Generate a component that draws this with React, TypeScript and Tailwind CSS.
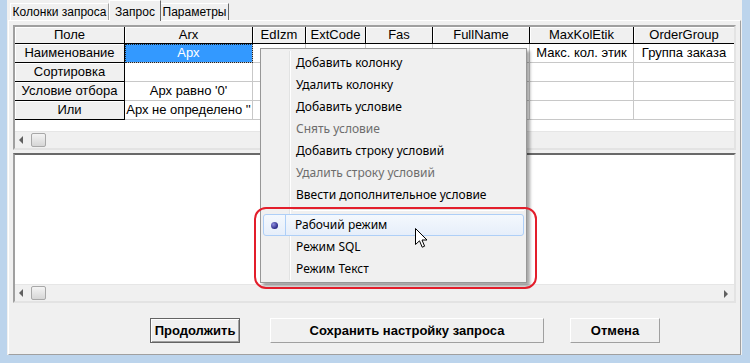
import React from 'react';

const COLS = [
  { name: 'Поле', w: 110 },
  { name: 'Arx', w: 128 },
  { name: 'EdIzm', w: 53 },
  { name: 'ExtCode', w: 60 },
  { name: 'Fas', w: 67 },
  { name: 'FullName', w: 97 },
  { name: 'MaxKolEtik', w: 104 },
  { name: 'OrderGroup', w: 101 },
];

const ROWS: string[][] = [
  ['Наименование', 'Арх', '', '', '', 'Наименован', 'Макс. кол. этик', 'Группа заказа'],
  ['Сортировка', '', '', '', '', '', '', ''],
  ['Условие отбора', "Арх равно '0'", '', '', '', '', '', ''],
  ['Или', "Арх не определено ''", '', '', '', '', '', ''],
];

const MENU: { label: string; disabled?: boolean; sep?: boolean; active?: boolean }[] = [
  { label: 'Добавить колонку' },
  { label: 'Удалить колонку' },
  { label: 'Добавить условие' },
  { label: 'Снять условие', disabled: true },
  { label: 'Добавить строку условий' },
  { label: 'Удалить строку условий', disabled: true },
  { label: 'Ввести дополнительное условие' },
  { label: '', sep: true },
  { label: 'Рабочий режим', active: true },
  { label: 'Режим SQL' },
  { label: 'Режим Текст' },
];

function ScrollBar({ right }: { right?: boolean }) {
  return (
    <div className="h-[17px] shrink-0 bg-[#f0f0f0] border-t border-[#e6e6e6] flex items-center relative">
      <span className="ml-[4px] w-0 h-0 border-y-[4px] border-y-transparent border-r-[4px] border-r-[#606060]" />
      <div className="ml-[8px] w-[15px] h-[14px] rounded-[2px] border border-[#a8a8a8] bg-gradient-to-b from-[#f4f4f4] to-[#d6d6d6]" />
      {right && (
        <span className="absolute right-[6px] top-[5px] w-0 h-0 border-y-[4px] border-y-transparent border-l-[4px] border-l-[#606060]" />
      )}
    </div>
  );
}

function Cell({ w, text, fixed, sel }: { w: number; text: string; fixed?: boolean; sel?: boolean }) {
  if (sel) {
    return (
      <div
        className="h-full shrink-0 bg-[#3399ff] text-white flex items-center justify-center outline-1 outline-dotted outline-[#202020] -outline-offset-1 border-r border-b border-[#c0c0c0]"
        style={{ width: w }}
      >
        {text}
      </div>
    );
  }
  return (
    <div
      className={
        fixed
          ? 'h-full shrink-0 bg-[#f0f0f0] border-r border-b border-black shadow-[inset_1px_1px_0_#ffffff] flex items-center justify-center whitespace-nowrap overflow-hidden'
          : 'h-full shrink-0 bg-white border-r border-b border-[#c8c8c8] flex items-center justify-center whitespace-nowrap overflow-hidden'
      }
      style={{ width: w }}
    >
      {text}
    </div>
  );
}

export default function App() {
  return (
    <div className="w-[750px] h-[363px] bg-[#bcd4ec] relative overflow-hidden pl-[7px] pr-[8px] pb-[8px] font-['Liberation_Sans',sans-serif] text-black">
      <div className="h-full bg-[#f0f0f0] flex flex-col">
        {/* tabs */}
        <div className="h-[20px] flex items-end pl-[3px] text-[12px] relative z-10 shrink-0">
          <div className="w-[99px] h-[17px] border-t border-l border-white border-r border-r-[#a0a0a0] flex items-center justify-center">
            Колонки запроса
          </div>
          <div className="w-[52px] h-[21px] -mb-[1px] bg-[#f0f0f0] border-t border-l border-white border-r border-r-[#696969] flex items-start pt-[2px] justify-center">
            Запрос
          </div>
          <div className="w-[68px] h-[17px] border-t border-white border-r border-r-[#696969] flex items-center justify-center">
            Параметры
          </div>
        </div>

        {/* panel */}
        <div className="ml-[1px] w-[733px] flex-1 border-t border-l border-white border-r border-b border-r-[#a0a0a0] border-b-[#a0a0a0] px-[4px] pt-[4px] flex flex-col">
          {/* upper grid */}
          <div className="h-[125px] shrink-0 border-[2px] border-t-[#a0a0a0] border-l-[#a0a0a0] border-b-[#e3e3e3] border-r-[#e3e3e3] flex flex-col bg-white text-[13px] overflow-hidden">
            <div className="h-[17px] flex shrink-0">
              {COLS.map(c => (
                <Cell key={c.name} w={c.w} text={c.name} fixed />
              ))}
            </div>
            {ROWS.map((r, i) => (
              <div key={i} className="h-[19px] flex shrink-0">
                {r.map((t, j) => (
                  <Cell key={j} w={COLS[j].w} text={t} fixed={j === 0} sel={i === 0 && j === 1} />
                ))}
              </div>
            ))}
            <div className="flex-1" />
            <ScrollBar />
          </div>

          {/* lower grid */}
          <div className="mt-[3px] h-[150px] shrink-0 border-[2px] border-t-[#696969] border-l-[#a0a0a0] border-b-[#e3e3e3] border-r-[#e3e3e3] bg-white flex flex-col">
            <div className="flex-1" />
            <ScrollBar right />
          </div>

          {/* buttons */}
          <div className="mt-[15px] flex pl-[137px] text-[13px] font-bold">
            <button className="w-[90px] h-[25px] bg-[#f0f0f0] border border-[#646464] shadow-[inset_1px_1px_0_#ffffff,inset_-1px_-1px_0_#a0a0a0]">
              Продолжить
            </button>
            <button className="ml-[30px] w-[274px] h-[25px] bg-[#f0f0f0] border border-t-white border-l-white border-r-[#a0a0a0] border-b-[#a0a0a0]">
              Сохранить настройку запроса
            </button>
            <button className="ml-[26px] w-[90px] h-[25px] bg-[#f0f0f0] border border-t-white border-l-white border-r-[#a0a0a0] border-b-[#a0a0a0]">
              Отмена
            </button>
          </div>
        </div>
      </div>

      {/* context menu */}
      <div className="absolute left-[260px] top-[48px] w-[267px] h-[235px] bg-[#f0f0f0] border border-[#979797] shadow-[3px_3px_3px_rgba(0,0,0,0.35)] font-['Noto_Sans',sans-serif] text-[12px] pt-[3px] px-[2px]">
        <div className="absolute left-[28px] top-[2px] bottom-[2px] w-[2px] border-l border-[#e2e3e3] border-r border-r-white" />
        {MENU.map((m, i) =>
          m.sep ? (
            <div key={i} className="h-[8px] flex items-center pl-[30px] relative">
              <div className="w-full h-[2px] border-t border-[#e2e3e3] border-b border-b-white" />
            </div>
          ) : m.active ? (
            <div
              key={i}
              className="h-[22px] flex items-center rounded-[3px] border border-[#aecff7] bg-gradient-to-b from-[#f4f8fd] to-[#e6eefa] relative"
            >
              <div className="w-[22px] h-full border-r border-[#aecff7] rounded-l-[3px] flex items-center justify-center">
                <span className="w-[7px] h-[7px] rounded-full bg-[radial-gradient(circle_at_35%_35%,#8d8de0,#2a2a86_70%)]" />
              </div>
              <span className="ml-[9px]">{m.label}</span>
            </div>
          ) : (
            <div
              key={i}
              className={`h-[22px] flex items-center pl-[33px] relative ${m.disabled ? 'text-[#6d6d6d]' : ''}`}
            >
              {m.label}
            </div>
          )
        )}
      </div>

      {/* red highlight */}
      <div className="absolute left-[254px] top-[207px] w-[283px] h-[82px] rounded-[12px] border-[2px] border-[#e31e2b]" />

      {/* mouse cursor */}
      <svg className="absolute left-[415px] top-[228px]" width="13" height="21" viewBox="0 0 13 21">
        <path
          d="M0.5 0.5 L0.5 16.5 L4.5 12.8 L7.2 19.2 L9.6 18.2 L7 12 L12 12 Z"
          fill="#ffffff"
          stroke="#000000"
          strokeWidth="1"
          strokeLinejoin="miter"
        />
      </svg>
    </div>
  );
}
